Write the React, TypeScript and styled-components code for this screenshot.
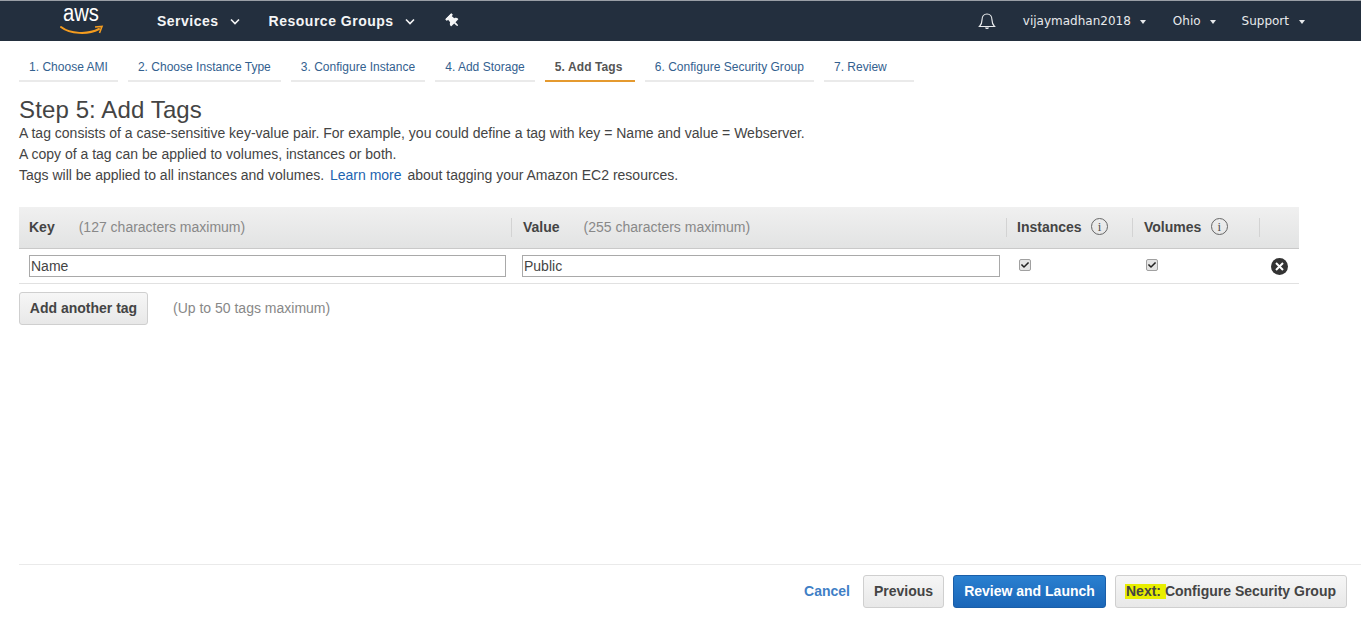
import React from "react";
import styled, { createGlobalStyle } from "styled-components";
import { FaThumbtack, FaCheck } from "react-icons/fa";

const GlobalStyle = createGlobalStyle`
  html, body {
    margin: 0;
    padding: 0;
    background: #fff;
    font-family: "Liberation Sans", Arial, sans-serif;
    overflow: hidden;
  }
`;

const Page = styled.div`
  width: 1361px;
  height: 627px;
  display: flex;
  flex-direction: column;
  box-sizing: border-box;
`;

const Nav = styled.div`
  height: 41px;
  box-sizing: border-box;
  border-top: 1px solid #9a9fa6;
  background: #232f3e;
  display: flex;
  align-items: center;
  color: #fff;
  padding: 0 0 0 60px;
`;

const Logo = styled.div`
  width: 42px;
  height: 36px;
  position: relative;
  margin-right: 55px;
`;

const LogoText = styled.span`
  display: block;
  font-size: 23px;
  line-height: 24px;
  text-align: center;
  margin-top: -2px;
  transform: scaleX(0.88);
`;

const LogoSmile = styled.svg`
  position: absolute;
  left: 0;
  top: 21px;
`;

const NavMain = styled.a<{ $gap: number }>`
  font-size: 14px;
  font-weight: bold;
  letter-spacing: 0.5px;
  color: #f4f5f6;
  display: flex;
  align-items: center;
  gap: 11px;
  margin-right: ${(p) => p.$gap}px;
`;

const Spacer = styled.div`
  flex: 1;
`;

const NavSmall = styled.a<{ $gap: number; $caretGap?: number }>`
  font-family: "DejaVu Sans", sans-serif;
  font-size: 12px;
  color: #e8eaec;
  display: flex;
  align-items: center;
  gap: ${(p) => p.$caretGap ?? 9}px;
  margin-right: ${(p) => p.$gap}px;
`;

const Caret = styled.span`
  width: 0;
  height: 0;
  border-left: 3.5px solid transparent;
  border-right: 3.5px solid transparent;
  border-top: 4px solid #e8eaec;
  margin-top: 2px;
`;

const Tabs = styled.div`
  display: flex;
  gap: 10px;
  padding: 15px 0 0 19px;
`;

const Tab = styled.a<{ $active?: boolean }>`
  height: 26px;
  min-width: 90px;
  box-sizing: border-box;
  padding: 3px 10px 0;
  font-size: 12px;
  line-height: 16px;
  letter-spacing: ${(p) => (p.$active ? "0.1px" : "0.015px")};
  color: ${(p) => (p.$active ? "#555" : "#33618f")};
  font-weight: ${(p) => (p.$active ? "bold" : "normal")};
  border-bottom: 2px solid ${(p) => (p.$active ? "#e59a2f" : "#eaeaea")};
`;

const Content = styled.div`
  padding: 0 0 0 19px;
`;

const Title = styled.h1`
  margin: 14px 0 0;
  font-size: 24px;
  line-height: 28px;
  font-weight: normal;
  letter-spacing: 0.12px;
  color: #444;
`;

const Para = styled.p`
  margin: 0;
  font-size: 14px;
  line-height: 21px;
  color: #444;
`;

const Intro = styled.div`
  margin-top: -1px;
`;

const LinkText = styled.a`
  color: #1d63b0;
  margin: 0 2px;
`;

const Table = styled.div`
  width: 1280px;
  margin-top: 21px;
`;

const Row = styled.div`
  display: grid;
  grid-template-columns: 493px 495px 126px 127px 39px;
`;

const HeadRow = styled(Row)`
  height: 42px;
  background: linear-gradient(#f0f0f0, #e2e3e3);
  border-bottom: 1px solid #c9c9c9;
  box-sizing: border-box;
`;

const HeadCell = styled.div<{ $divider?: boolean; $left?: number }>`
  position: relative;
  display: flex;
  align-items: center;
  padding-left: ${(p) => p.$left ?? 10}px;
  padding-bottom: 2px;
  font-size: 14px;
  color: #444;
  &::after {
    content: "";
    display: ${(p) => (p.$divider ? "block" : "none")};
    position: absolute;
    right: 0;
    top: 11px;
    height: 19px;
    width: 1px;
    background: #d3d3d3;
  }
`;

const HeadLabel = styled.b``;

const Hint = styled.span<{ $gap?: number; $lift?: number }>`
  font-size: 14px;
  color: #888;
  margin-left: ${(p) => p.$gap ?? 0}px;
  margin-top: ${(p) => -(p.$lift ?? 0)}px;
`;

const InfoIcon = styled.span`
  width: 17px;
  height: 17px;
  box-sizing: border-box;
  border: 1px solid #666;
  border-radius: 50%;
  margin-left: 9.5px;
  font-family: "Liberation Serif", serif;
  font-size: 13px;
  line-height: 15px;
  text-align: center;
  color: #555;
`;

const BodyRow = styled(Row)`
  height: 35px;
  border-bottom: 1px solid #e1e1e1;
  box-sizing: border-box;
`;

const BodyCell = styled.div<{ $left: number }>`
  display: flex;
  align-items: center;
  padding-left: ${(p) => p.$left}px;
`;

const TextInput = styled.input<{ $width: number }>`
  width: ${(p) => p.$width}px;
  height: 22px;
  box-sizing: border-box;
  border: 1px solid #a9a9a9;
  padding: 0 1px;
  font-family: "Liberation Sans", Arial, sans-serif;
  font-size: 14px;
  color: #444;
  outline: none;
`;

const Check = styled.span`
  width: 12px;
  height: 12px;
  box-sizing: border-box;
  border: 1px solid #a0a0a0;
  border-radius: 2px;
  background: #e4e4e4;
  display: flex;
  align-items: center;
  justify-content: center;
  color: #222;
  font-size: 8px;
  margin-top: -3px;
`;

const Remove = styled.span`
  width: 17px;
  height: 17px;
  margin-left: 11px;
  border-radius: 50%;
  background: #333;
  display: flex;
  align-items: center;
  justify-content: center;
`;

const AddRow = styled.div`
  display: flex;
  align-items: center;
  gap: 25px;
  margin-top: 8px;
`;

const Button = styled.button<{ $primary?: boolean; $width: number }>`
  width: ${(p) => p.$width}px;
  height: 33px;
  box-sizing: border-box;
  padding: 0 0 2px;
  border-radius: 3px;
  border: 1px solid ${(p) => (p.$primary ? "#1a5ea8" : "#cfcfcf")};
  background: ${(p) =>
    p.$primary ? "linear-gradient(#2a80d0, #1a66b8)" : "linear-gradient(#f6f6f6, #e8e8e8)"};
  color: ${(p) => (p.$primary ? "#fff" : "#444")};
  font-family: "Liberation Sans", Arial, sans-serif;
  font-size: 14px;
  font-weight: bold;
`;

const Footer = styled.div`
  margin: auto 0 0 19px;
  height: 63px;
  box-sizing: border-box;
  border-top: 1px solid #eaeaea;
  display: flex;
  align-items: flex-start;
  justify-content: flex-end;
  padding: 10px 14px 0 0;
  gap: 9px;
`;

const Cancel = styled.a`
  font-size: 14px;
  font-weight: bold;
  color: #3f7fc6;
  line-height: 33px;
  margin-right: 4px;
`;

const Marked = styled.span`
  display: inline-block;
  line-height: 15px;
  background: #e8ee00;
  padding: 0 1px 0 1px;
  margin: 0 -1px;
  white-space: pre;
`;

const steps = [
  "1. Choose AMI",
  "2. Choose Instance Type",
  "3. Configure Instance",
  "4. Add Storage",
  "5. Add Tags",
  "6. Configure Security Group",
  "7. Review",
];

export default function App() {
  return (
    <Page>
      <GlobalStyle />
      <Nav>
        <Logo>
          <LogoText>aws</LogoText>
          <LogoSmile width="44" height="14" viewBox="0 0 44 14">
            <path d="M1 3 C 10 10, 28 11, 39 5" fill="none" stroke="#f49c1f" strokeWidth="2" strokeLinecap="round" />
            <path d="M35 3 L42 2.5 L39.5 9" fill="none" stroke="#f49c1f" strokeWidth="1.6" />
          </LogoSmile>
        </Logo>
        <NavMain $gap={29}>
          Services
          <svg width="10" height="7" viewBox="0 0 10 7"><path d="M1 1.5 L5 5.5 L9 1.5" fill="none" stroke="#f4f5f6" strokeWidth="1.6" /></svg>
        </NavMain>
        <NavMain $gap={31}>
          Resource Groups
          <svg width="10" height="7" viewBox="0 0 10 7"><path d="M1 1.5 L5 5.5 L9 1.5" fill="none" stroke="#f4f5f6" strokeWidth="1.6" /></svg>
        </NavMain>
        <FaThumbtack size={14} color="#f4f5f6" style={{ transform: "rotate(-45deg)" }} />
        <Spacer />
        <NavSmall $gap={27}>
          <svg width="18" height="18" viewBox="0 0 18 18">
            <path d="M1.5 14.5 C3.5 12.5 4 10 4 8 C4 4.5 6 2 9 2 C12 2 14 4.5 14 8 C14 10 14.5 12.5 16.5 14.5 Z" fill="none" stroke="#e8eaec" strokeWidth="1.2" />
            <path d="M7 15.5 C7.5 17.5 10.5 17.5 11 15.5 Z" fill="#e8eaec" />
          </svg>
        </NavSmall>
        <NavSmall $gap={27}>vijaymadhan2018<Caret /></NavSmall>
        <NavSmall $gap={26}>Ohio<Caret /></NavSmall>
        <NavSmall $gap={56} $caretGap={10}>Support<Caret /></NavSmall>
      </Nav>
      <Tabs>
        {steps.map((s, i) => (
          <Tab key={s} $active={i === 4}>{s}</Tab>
        ))}
      </Tabs>
      <Content>
        <Title>Step 5: Add Tags</Title>
        <Intro>
          <Para>A tag consists of a case-sensitive key-value pair. For example, you could define a tag with key = Name and value = Webserver.</Para>
          <Para>A copy of a tag can be applied to volumes, instances or both.</Para>
          <Para>Tags will be applied to all instances and volumes. <LinkText>Learn more</LinkText> about tagging your Amazon EC2 resources.</Para>
        </Intro>
        <Table>
          <HeadRow>
            <HeadCell $divider><HeadLabel>Key</HeadLabel><Hint $gap={24}>(127 characters maximum)</Hint></HeadCell>
            <HeadCell $divider $left={11}><HeadLabel>Value</HeadLabel><Hint $gap={24}>(255 characters maximum)</Hint></HeadCell>
            <HeadCell $divider><HeadLabel>Instances</HeadLabel><InfoIcon>i</InfoIcon></HeadCell>
            <HeadCell $divider $left={11}><HeadLabel>Volumes</HeadLabel><InfoIcon>i</InfoIcon></HeadCell>
            <HeadCell />
          </HeadRow>
          <BodyRow>
            <BodyCell $left={10}><TextInput $width={477} readOnly value="Name" /></BodyCell>
            <BodyCell $left={10}><TextInput $width={478} readOnly value="Public" /></BodyCell>
            <BodyCell $left={12}><Check><FaCheck /></Check></BodyCell>
            <BodyCell $left={13}><Check><FaCheck /></Check></BodyCell>
            <BodyCell $left={0}>
              <Remove>
                <svg width="9" height="9" viewBox="0 0 9 9"><path d="M1 1 L8 8 M8 1 L1 8" stroke="#fff" strokeWidth="2" /></svg>
              </Remove>
            </BodyCell>
          </BodyRow>
        </Table>
        <AddRow>
          <Button $width={129}>Add another tag</Button>
          <Hint $lift={2}>(Up to 50 tags maximum)</Hint>
        </AddRow>
      </Content>
      <Footer>
        <Cancel>Cancel</Cancel>
        <Button $width={81}>Previous</Button>
        <Button $primary $width={153}>Review and Launch</Button>
        <Button $width={232}><Marked>Next: </Marked>Configure Security Group</Button>
      </Footer>
    </Page>
  );
}
